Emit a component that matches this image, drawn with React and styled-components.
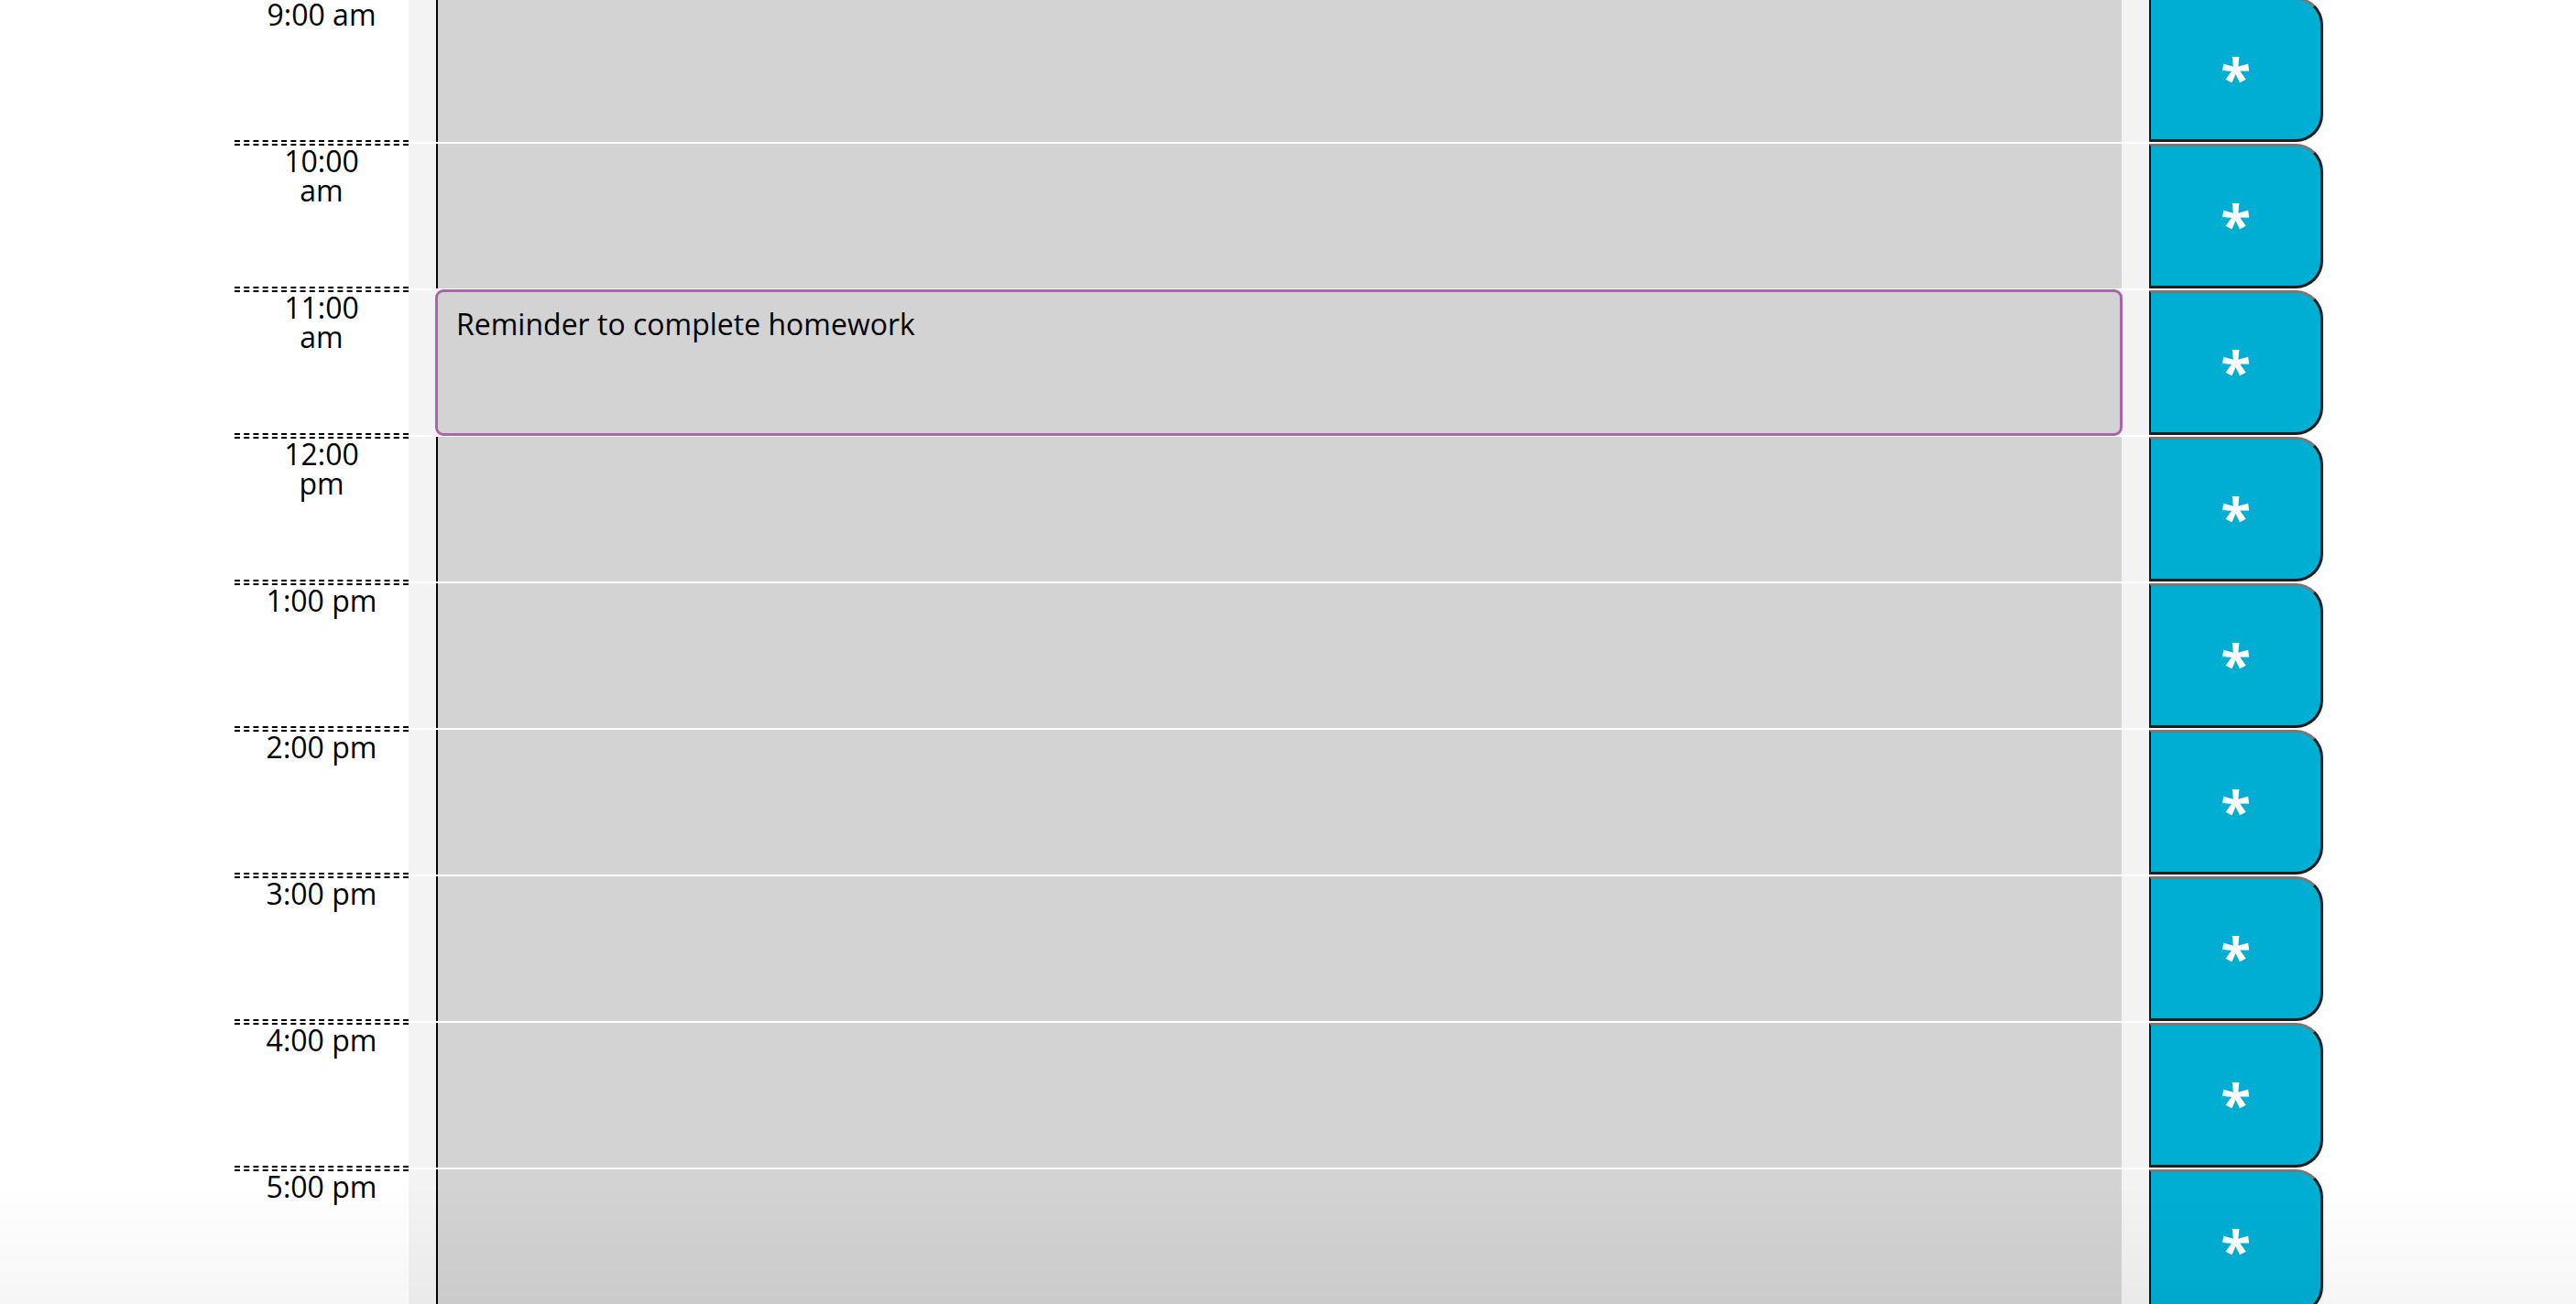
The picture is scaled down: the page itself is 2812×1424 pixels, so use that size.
import React from 'react';
import styled, { createGlobalStyle } from 'styled-components';

const GlobalStyle = createGlobalStyle`
  html, body {
    margin: 0;
    padding: 0;
    background: #fff;
  }
  body {
    font-family: "Open Sans", "Liberation Sans", sans-serif;
    overflow: hidden;
  }
`;

const Planner = styled.div`
  width: 2280px;
  margin: -3px 0 0 256px;
`;

const Row = styled.div`
  display: flex;
  height: 160px;
  box-sizing: border-box;
  border-bottom: 2px solid #fff;
`;

const Hour = styled.div`
  width: 190px;
  flex: none;
  box-sizing: border-box;
  padding: 1px 30px 0;
  border-top: 2px dashed #000;
  border-bottom: 2px dashed #000;
  text-align: center;
  font-size: 32px;
  line-height: 32px;
  color: #000;
`;

const Slot = styled.div`
  flex: 1;
  display: flex;
  padding: 0 30px;
  background: #f3f3f3;
`;

const Note = styled.textarea`
  flex: 1;
  margin: 0;
  box-sizing: border-box;
  height: 100%;
  padding: 15px 20px 12px;
  border: none;
  border-left: 2px solid ${p => (p.$focused ? 'transparent' : '#000')};
  border-radius: ${p => (p.$focused ? '8px' : '0')};
  outline: ${p => (p.$focused ? '3px solid #a865a8' : 'none')};
  outline-offset: -2px;
  background: #d3d3d3;
  color: #000;
  font-family: "Open Sans", "Liberation Sans", sans-serif;
  font-size: 32px;
  line-height: 1.36;
  resize: none;
`;

const SaveButton = styled.button`
  width: 190px;
  flex: none;
  box-sizing: border-box;
  margin: 0;
  padding: 18px 0 0;
  background: #00aed4;
  border-style: solid;
  border-width: 3px 3px 3px 2px;
  border-color: #777 #1e1e1e #1e1e1e #111;
  border-radius: 0 30px 30px 0;
  box-shadow: 2px 0 3px rgba(0, 0, 0, 0.05);
  color: #fff;
  font-family: "Open Sans", "Liberation Sans", sans-serif;
  font-weight: 700;
  font-size: 60px;
  line-height: 1;
  cursor: pointer;
`;

const Fade = styled.div`
  position: fixed;
  left: 0;
  right: 0;
  bottom: 0;
  height: 130px;
  pointer-events: none;
  background: linear-gradient(to bottom, rgba(0, 0, 0, 0), rgba(0, 0, 0, 0.035));
`;

const hours = [
  { label: '9:00 am', text: '' },
  { label: '10:00 am', text: '' },
  { label: '11:00 am', text: 'Reminder to complete homework', focused: true },
  { label: '12:00 pm', text: '' },
  { label: '1:00 pm', text: '' },
  { label: '2:00 pm', text: '' },
  { label: '3:00 pm', text: '' },
  { label: '4:00 pm', text: '' },
  { label: '5:00 pm', text: '' },
];

export default function App() {
  return (
    <>
      <GlobalStyle />
      <Planner>
        {hours.map(h => (
          <Row key={h.label}>
            <Hour>{h.label}</Hour>
            <Slot>
              <Note $focused={h.focused} defaultValue={h.text} />
            </Slot>
            <SaveButton>*</SaveButton>
          </Row>
        ))}
      </Planner>
      <Fade />
    </>
  );
}
